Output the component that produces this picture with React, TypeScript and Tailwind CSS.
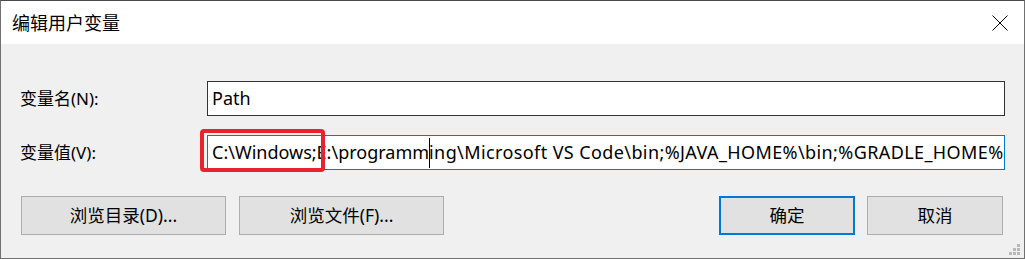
import React from "react";

const cjk = { fontFamily: '"Noto Sans", "Noto Sans CJK SC", sans-serif' };

function Btn({ children, primary, className }: { children: React.ReactNode; primary?: boolean; className: string }) {
  return (
    <div
      className={`flex h-[39px] items-center justify-center bg-[#e1e1e1] text-[17.5px] text-black ${
        primary ? "border-2 border-[#0078d7]" : "border border-[#adadad]"
      } ${className}`}
    >
      {children}
    </div>
  );
}

export default function App() {
  return (
    <div
      className="relative flex h-[259px] w-[1025px] flex-col overflow-hidden border border-t-[#4a4a4a] border-x-[#707070] border-b-[#707070] bg-[#f0f0f0]"
      style={cjk}
    >
      {/* Title bar */}
      <div className="flex h-[43px] items-center justify-between bg-white pl-[11px] pr-[16px]">
        <span className="text-[18px] leading-none text-black">编辑用户变量</span>
        <svg width="16" height="16" viewBox="0 0 16 16">
          <path d="M0.5 0.5 L15.5 15.5 M15.5 0.5 L0.5 15.5" stroke="#000" strokeWidth="1" fill="none" />
        </svg>
      </div>

      {/* Body */}
      <div className="flex flex-1 flex-col pl-[19px] pr-[19px] pt-[37px]">
        <div className="flex h-[35px] items-center">
          <span className="w-[187px] text-[17px] text-black">变量名(N):</span>
          <div className="flex h-[35px] flex-1 items-center border border-[#333333] bg-white pl-[4px] text-[18px] text-black">
            Path
          </div>
        </div>
        <div className="mt-[19px] flex h-[35px] items-center">
          <span className="w-[187px] text-[17px] text-black">变量值(V):</span>
          <div className="flex h-[35px] flex-1 items-center overflow-hidden whitespace-nowrap border border-[#0078d7] bg-white pl-[4px] text-[18px] text-black">
            <span>C:\Windows;E:\programm</span>
            <span className="relative inline-block h-[30px] w-0">
              <span className="absolute left-0 top-0 h-[30px] w-px bg-black" />
            </span>
            <span className="tracking-[0.4px]">ing\Microsoft VS Code\bin;%JAVA_HOME%\bin;%GRADLE_HOME%</span>
          </div>
        </div>
        <div className="mt-[26px] flex items-center pl-[1px]">
          <Btn className="w-[205px]">浏览目录(D)...</Btn>
          <Btn className="ml-[13px] w-[205px]">浏览文件(F)...</Btn>
          <Btn primary className="ml-auto w-[136px]">确定</Btn>
          <Btn className="ml-[12px] mr-[2px] w-[136px]">取消</Btn>
        </div>
      </div>

      {/* Red highlight annotation */}
      <div className="absolute left-[199px] top-[128px] h-[43px] w-[125px] rounded-[4px] border-[4px] border-[#e8232b]" />

      {/* Resize grip */}
      <div className="absolute bottom-[3px] right-[4px] grid grid-cols-3 gap-[1px]">
        <span className="h-[3px] w-[3px]" />
        <span className="h-[3px] w-[3px]" />
        <span className="h-[3px] w-[3px] bg-[#b9b9b9]" />
        <span className="h-[3px] w-[3px]" />
        <span className="h-[3px] w-[3px] bg-[#b9b9b9]" />
        <span className="h-[3px] w-[3px] bg-[#b9b9b9]" />
        <span className="h-[3px] w-[3px] bg-[#b9b9b9]" />
        <span className="h-[3px] w-[3px] bg-[#b9b9b9]" />
        <span className="h-[3px] w-[3px] bg-[#b9b9b9]" />
      </div>
    </div>
  );
}
